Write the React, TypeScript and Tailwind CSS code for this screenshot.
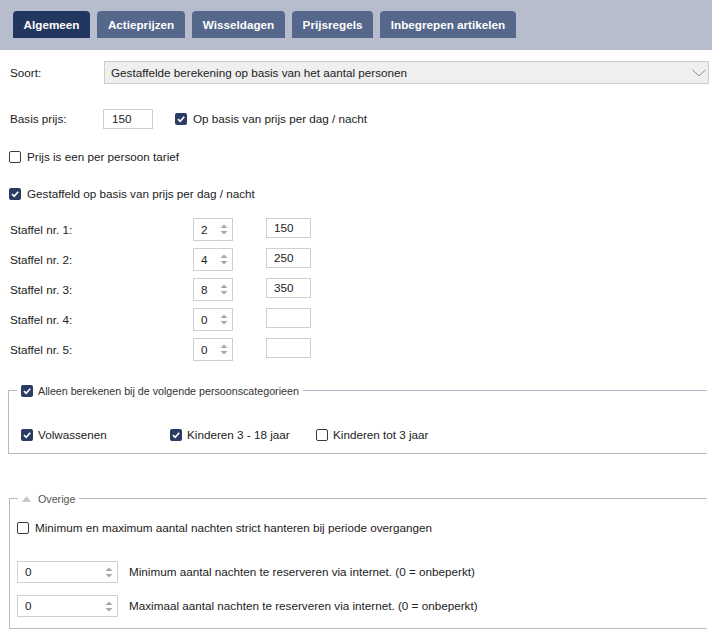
import React from 'react';

const tabs = [
  { label: 'Algemeen', w: 'w-[77px]', active: true },
  { label: 'Actieprijzen', w: 'w-[88px]', active: false },
  { label: 'Wisseldagen', w: 'w-[93px]', active: false },
  { label: 'Prijsregels', w: 'w-[81px]', active: false },
  { label: 'Inbegrepen artikelen', w: 'w-[136px]', active: false },
];

const staffels = [
  { nr: 1, count: '2', price: '150' },
  { nr: 2, count: '4', price: '250' },
  { nr: 3, count: '8', price: '350' },
  { nr: 4, count: '0', price: '' },
  { nr: 5, count: '0', price: '' },
];

function Check({ checked }: { checked: boolean }) {
  if (checked) {
    return (
      <span className="w-[12px] h-[12px] shrink-0 rounded-[2px] bg-[#2a3c63] flex items-center justify-center">
        <svg width="10" height="10" viewBox="0 0 10 10">
          <polyline points="2,5.2 4.2,7.3 8.2,2.8" fill="none" stroke="#fff" strokeWidth="1.7" />
        </svg>
      </span>
    );
  }
  return <span className="w-[12px] h-[12px] shrink-0 rounded-[2px] border border-[#3a3a3a] bg-white" />;
}

function Spinner() {
  return (
    <svg width="8" height="13" viewBox="0 0 8 13" className="shrink-0">
      <path d="M0.5 5 L4 1.5 L7.5 5 Z" fill="#a8a8a8" />
      <path d="M0.5 8 L4 11.5 L7.5 8 Z" fill="#a8a8a8" />
    </svg>
  );
}

function NumberBox({ value, wide }: { value: string; wide?: boolean }) {
  return (
    <div
      className={`${wide ? 'w-[101px] h-[22px]' : 'w-[40px] h-[23px]'} shrink-0 border border-[#cfcfcf] bg-white flex items-center pl-[7px] pr-[4px]`}
    >
      <span className="flex-1">{value}</span>
      <Spinner />
    </div>
  );
}

export default function App() {
  return (
    <div className="w-[712px] h-[643px] overflow-hidden bg-white text-[11.7px] leading-[14px] text-[#222] font-['Liberation_Sans',Arial,sans-serif]">
      <div className="h-[50px] bg-[#b7bdcc] pt-[11px] pl-[13px] flex gap-[7px]">
        {tabs.map((t) => (
          <div
            key={t.label}
            className={`${t.w} h-[27px] rounded-t-[4px] flex items-center justify-center text-white font-bold ${
              t.active ? 'bg-[#22375f]' : 'bg-[#55678a]'
            }`}
          >
            {t.label}
          </div>
        ))}
      </div>

      <div className="mt-[11px] flex items-center h-[23px]">
        <span className="w-[104px] pl-[10px] shrink-0">Soort:</span>
        <div className="w-[605px] h-[23px] bg-[#efefef] border border-[#cdcdcd] flex items-center justify-between pl-[6px] pr-[2px]">
          <span>Gestaffelde berekening op basis van het aantal personen</span>
          <svg width="14" height="8" viewBox="0 0 14 8">
            <polyline points="0.5,0.8 7,7 13.5,0.8" fill="none" stroke="#8c8c8c" strokeWidth="1" />
          </svg>
        </div>
      </div>

      <div className="mt-[25px] flex items-center h-[20px]">
        <span className="w-[103px] pl-[10px] shrink-0">Basis prijs:</span>
        <div className="w-[50px] h-[20px] border border-[#cfcfcf] flex items-center pl-[8px]">150</div>
        <div className="ml-[22px] flex items-center gap-[6px]">
          <Check checked />
          <span>Op basis van prijs per dag / nacht</span>
        </div>
      </div>

      <div className="mt-[18px] h-[20px] pl-[9px] flex items-center gap-[6px]">
        <Check checked={false} />
        <span>Prijs is een per persoon tarief</span>
      </div>

      <div className="mt-[17px] h-[20px] pl-[9px] flex items-center gap-[6px]">
        <Check checked />
        <span>Gestaffeld op basis van prijs per dag / nacht</span>
      </div>

      <div className="mt-[14px] flex flex-col gap-[7px]">
        {staffels.map((s) => (
          <div key={s.nr} className="flex items-start h-[23px]">
            <span className="w-[193px] pl-[10px] shrink-0 h-[23px] flex items-center">Staffel nr. {s.nr}:</span>
            <NumberBox value={s.count} />
            <div className="ml-[33px] w-[45px] h-[20px] border border-[#cfcfcf] flex items-center pl-[7px]">{s.price}</div>
          </div>
        ))}
      </div>

      <fieldset className="mt-[23px] ml-[8px] mr-[5px] border-t border-l border-b border-[#b5bac8]">
        <legend className="ml-[8px] px-[4px]">
          <span className="flex items-center gap-[5px] h-[13px] text-[10.7px] text-[#333]">
            <Check checked />
            <span>Alleen berekenen bij de volgende persoonscategorieen</span>
          </span>
        </legend>
        <div className="mt-[38px] pb-[18px] pl-[12px] flex items-center h-[14px]">
          <div className="w-[149px] flex items-center gap-[5px]">
            <Check checked />
            <span>Volwassenen</span>
          </div>
          <div className="w-[146px] flex items-center gap-[5px]">
            <Check checked />
            <span>Kinderen 3 - 18 jaar</span>
          </div>
          <div className="flex items-center gap-[5px]">
            <Check checked={false} />
            <span>Kinderen tot 3 jaar</span>
          </div>
        </div>
      </fieldset>

      <fieldset className="mt-[38px] ml-[9px] mr-[5px] border-t border-l border-b border-[#b5bac8]">
        <legend className="ml-[8px] px-[4px]">
          <span className="flex items-center gap-[7px] h-[13px] text-[10.7px] text-[#555]">
            <svg width="9" height="6" viewBox="0 0 9 6">
              <path d="M0 6 L4.5 0 L9 6 Z" fill="#c6c6c6" />
            </svg>
            <span>Overige</span>
          </span>
        </legend>
        <div className="mt-[16px] pl-[7px] h-[14px] flex items-center gap-[6px]">
          <Check checked={false} />
          <span>Minimum en maximum aantal nachten strict hanteren bij periode overgangen</span>
        </div>
        <div className="mt-[26px] pl-[7px] flex items-center gap-[11px]">
          <NumberBox value="0" wide />
          <span>Minimum aantal nachten te reserveren via internet. (0 = onbeperkt)</span>
        </div>
        <div className="mt-[12px] pb-[11px] pl-[7px] flex items-center gap-[11px]">
          <NumberBox value="0" wide />
          <span>Maximaal aantal nachten te reserveren via internet. (0 = onbeperkt)</span>
        </div>
      </fieldset>
    </div>
  );
}
